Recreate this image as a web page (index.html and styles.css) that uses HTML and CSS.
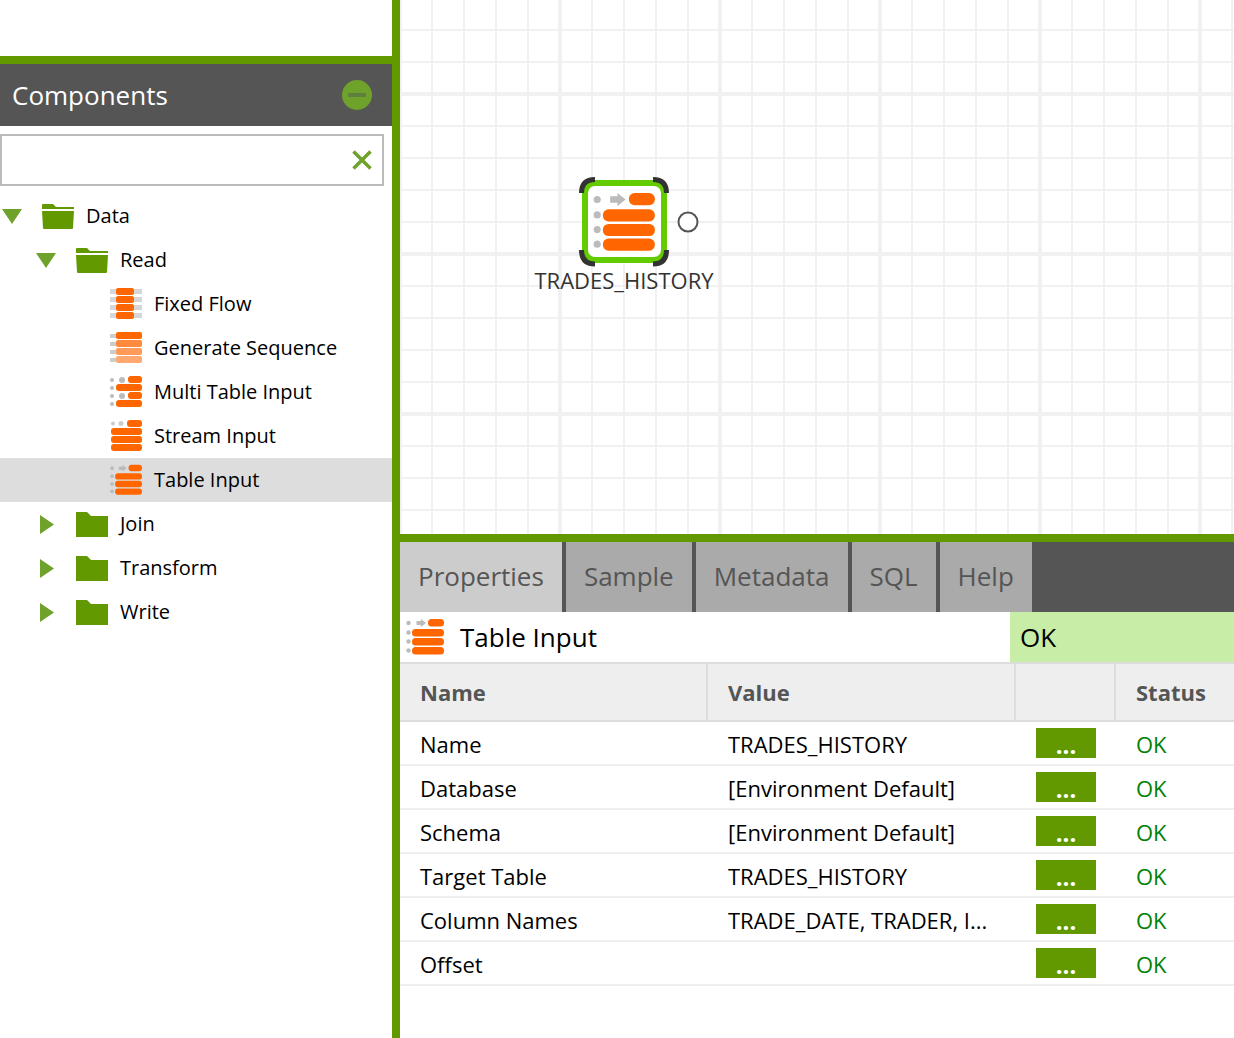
FILE: index.html
```html
<!DOCTYPE html>
<html lang="en">
<head>
<meta charset="utf-8">
<title>Components</title>
<link rel="stylesheet" href="styles.css">
</head>
<body>
<svg class="defs" width="0" height="0" aria-hidden="true">
  <defs>
    <symbol id="i-table" viewBox="0 0 38 36">
      <g fill="#bbb"><circle cx="2.500" cy="4" r="2.200"/><circle cx="2.500" cy="13.500" r="2.200"/><circle cx="2.500" cy="22.500" r="2.200"/><circle cx="2.500" cy="31.500" r="2.200"/><path d="M10.500 2h4.500V0l5 4-5 4V6h-4.500z"/></g>
      <g fill="#f60"><rect x="22" y="0" width="16" height="7.500" rx="3.500"/><rect x="6" y="10" width="32" height="7.500" rx="3.500"/><rect x="6" y="19" width="32" height="7.500" rx="3.500"/><rect x="6" y="28" width="32" height="7.500" rx="3.500"/></g>
    </symbol>
    <symbol id="i-fixed" viewBox="0 0 32 32">
      <g fill="#ccc"><rect x="0" y="1" width="32" height="5" opacity=".8"/><rect x="0" y="9" width="32" height="5" opacity=".8"/><rect x="0" y="17" width="32" height="5" opacity=".8"/><rect x="0" y="25" width="32" height="5" opacity=".8"/></g>
      <g fill="#f60"><rect x="6" y="0" width="18" height="7" rx="2"/><rect x="6" y="8" width="18" height="7" rx="2"/><rect x="6" y="16" width="18" height="7" rx="2"/><rect x="6" y="24" width="18" height="7" rx="2"/></g>
    </symbol>
    <symbol id="i-seq" viewBox="0 0 32 32">
      <g fill="#ccc"><rect x="0" y="2" width="6" height="4"/><rect x="0" y="10" width="6" height="4"/><rect x="0" y="18" width="6" height="4"/><rect x="0" y="26" width="6" height="4"/></g>
      <rect x="6" y="0" width="26" height="7" rx="2" fill="#f60"/><rect x="6" y="8" width="26" height="7" rx="2" fill="#ff8a3d"/><rect x="6" y="16" width="26" height="7" rx="2" fill="#ff9a58"/><rect x="6" y="24" width="26" height="7" rx="2" fill="#ffa870"/>
    </symbol>
    <symbol id="i-multi" viewBox="0 0 32 32">
      <g fill="#bbb"><circle cx="2" cy="4" r="2"/><circle cx="12" cy="4" r="3"/><circle cx="2" cy="12" r="2"/><circle cx="2" cy="20" r="2"/><circle cx="12" cy="20" r="3"/><circle cx="2" cy="28" r="2"/></g>
      <g fill="#f60"><rect x="18" y="0" width="14" height="7" rx="3"/><rect x="6" y="8" width="26" height="7" rx="3"/><rect x="18" y="16" width="14" height="7" rx="3"/><rect x="6" y="24" width="26" height="7" rx="3"/></g>
    </symbol>
    <symbol id="i-stream" viewBox="0 0 32 32">
      <g fill="#ccc"><circle cx="3" cy="3.500" r="2"/><circle cx="11" cy="3.500" r="2.500"/></g>
      <g fill="#f60"><rect x="17" y="0" width="15" height="7" rx="3"/><rect x="1" y="8" width="31" height="7" rx="3"/><rect x="1" y="16" width="31" height="7" rx="3"/><rect x="1" y="24" width="31" height="7" rx="3"/></g>
    </symbol>
    <symbol id="i-folder-open" viewBox="0 0 32 25">
      <path fill="#629900" d="M0 1q0-1 1-1h10l3 3h18v2H0z"/><path fill="#629900" d="M0 7h32l-1 17q0 1-1 1H2q-1 0-1-1z"/>
    </symbol>
    <symbol id="i-folder" viewBox="0 0 32 25">
      <path fill="#629900" d="M0 0h11l4 4h17v21H0z"/>
    </symbol>
    <symbol id="i-down" viewBox="0 0 20 15"><path fill="#6fa22a" d="M0 0h20L10 15z"/></symbol>
    <symbol id="i-right" viewBox="0 0 14 19"><path fill="#6fa22a" d="M0 0l14 9.500L0 19z"/></symbol>
  </defs>
</svg>

<div class="app">
  <aside class="side">
    <div class="side-top"></div>
    <header class="panel-head">
      <h2 class="panel-title">Components</h2>
      <svg class="minus" viewBox="0 0 30 30" aria-hidden="true"><circle cx="15" cy="15" r="15" fill="#6fa22a"/><rect x="6" y="13" width="18" height="4" rx="1" fill="#5f7f3f"/></svg>
    </header>
    <div class="search">
      <svg class="clear" viewBox="0 0 20 20" aria-hidden="true"><path d="M1.500 1.500l17 17M18.500 1.500l-17 17" stroke="#6fa22a" stroke-width="3.500" fill="none"/></svg>
    </div>
    <ul class="tree">
      <li class="row"><svg class="tog tog-down"><use href="#i-down"/></svg><svg class="ico ico-f"><use href="#i-folder-open"/></svg><span>Data</span></li>
      <li class="row l1"><svg class="tog tog-down"><use href="#i-down"/></svg><svg class="ico ico-f"><use href="#i-folder-open"/></svg><span>Read</span></li>
      <li class="row l2"><svg class="ico ico-c"><use href="#i-fixed"/></svg><span>Fixed Flow</span></li>
      <li class="row l2"><svg class="ico ico-c"><use href="#i-seq"/></svg><span>Generate Sequence</span></li>
      <li class="row l2"><svg class="ico ico-c"><use href="#i-multi"/></svg><span>Multi Table Input</span></li>
      <li class="row l2"><svg class="ico ico-c"><use href="#i-stream"/></svg><span>Stream Input</span></li>
      <li class="row l2 selected"><svg class="ico ico-c"><use href="#i-table"/></svg><span>Table Input</span></li>
      <li class="row l1"><svg class="tog tog-right"><use href="#i-right"/></svg><svg class="ico ico-f"><use href="#i-folder"/></svg><span>Join</span></li>
      <li class="row l1"><svg class="tog tog-right"><use href="#i-right"/></svg><svg class="ico ico-f"><use href="#i-folder"/></svg><span>Transform</span></li>
      <li class="row l1"><svg class="tog tog-right"><use href="#i-right"/></svg><svg class="ico ico-f"><use href="#i-folder"/></svg><span>Write</span></li>
    </ul>
  </aside>

  <main class="main">
    <section class="canvas">
      <div class="node">
        <svg class="node-icon" viewBox="0 0 90 90" aria-hidden="true">
          <rect x="6" y="6" width="79" height="77" rx="10" fill="#fff" stroke="#62cc00" stroke-width="6"/>
          <g fill="none" stroke="#333" stroke-width="5">
            <path d="M2.500 16Q2.500 2.500 16 2.500"/><path d="M74 2.500Q87.500 2.500 87.500 16"/><path d="M2.500 73Q2.500 87 16 87"/><path d="M87.500 73Q87.500 87 74 87"/>
          </g>
          <svg x="14" y="16" width="62" height="58.500"><use href="#i-table"/></svg>
        </svg>
        <span class="node-label">TRADES_HISTORY</span>
      </div>
      <svg class="port" viewBox="0 0 22 22" aria-hidden="true"><circle cx="11" cy="11" r="9.500" fill="#fff" stroke="#555" stroke-width="2"/></svg>
    </section>

    <section class="details">
      <nav class="tabs">
        <span class="tab active">Properties</span>
        <span class="tab">Sample</span>
        <span class="tab">Metadata</span>
        <span class="tab">SQL</span>
        <span class="tab">Help</span>
      </nav>
      <div class="title-bar">
        <div class="title-name"><svg class="title-icon"><use href="#i-table"/></svg><span>Table Input</span></div>
        <div class="title-status">OK</div>
      </div>
      <div class="grid-row grid-head">
        <div class="cell">Name</div><div class="cell">Value</div><div class="cell"></div><div class="cell">Status</div>
      </div>
      <div class="grid-row"><div class="cell">Name</div><div class="cell">TRADES_HISTORY</div><div class="cell"><span class="more">...</span></div><div class="cell ok">OK</div></div>
      <div class="grid-row"><div class="cell">Database</div><div class="cell">[Environment Default]</div><div class="cell"><span class="more">...</span></div><div class="cell ok">OK</div></div>
      <div class="grid-row"><div class="cell">Schema</div><div class="cell">[Environment Default]</div><div class="cell"><span class="more">...</span></div><div class="cell ok">OK</div></div>
      <div class="grid-row"><div class="cell">Target Table</div><div class="cell">TRADES_HISTORY</div><div class="cell"><span class="more">...</span></div><div class="cell ok">OK</div></div>
      <div class="grid-row"><div class="cell">Column Names</div><div class="cell">TRADE_DATE, TRADER, I...</div><div class="cell"><span class="more">...</span></div><div class="cell ok">OK</div></div>
      <div class="grid-row"><div class="cell">Offset</div><div class="cell"></div><div class="cell"><span class="more">...</span></div><div class="cell ok">OK</div></div>
    </section>
  </main>
</div>
</body>
</html>
```
FILE: styles.css
```css
* { box-sizing: border-box; }
html, body { margin: 0; padding: 0; height: 100%; }
body { font-family: "Open Sans", "Noto Sans", sans-serif; color: #000; background: #fff; overflow: hidden; }
.defs { position: absolute; }

.app { display: flex; width: 1234px; height: 1038px; }

/* left panel */
.side { width: 400px; flex: none; border-right: 8px solid #629900; }
.side-top { height: 64px; border-bottom: 8px solid #629900; }
.panel-head { height: 62px; background: #555; display: flex; align-items: center; justify-content: space-between; padding: 0 20px 0 12px; }
.panel-title { margin: 0 0 1px; font-size: 26px; font-weight: 400; color: #fff; }
.minus { width: 30px; height: 30px; }
.search { width: 384px; height: 52px; margin-top: 8px; border: 2px solid #bbb; display: flex; align-items: center; justify-content: flex-end; padding-right: 10px; }
.clear { width: 20px; height: 20px; }

.tree { list-style: none; margin: 8px 0 0; padding: 0; }
.row { height: 44px; display: flex; align-items: center; font-size: 20px; }
.row span { margin: 0 0 2px 12px; }
.l1 { padding-left: 34px; }
.l2 { padding-left: 110px; }
.selected { background: #ddd; }
.tog { flex: none; filter: blur(.4px); }
.tog-down { width: 20px; height: 15px; margin: 0 20px 0 2px; }
.tog-right { width: 14px; height: 19px; margin: 0 22px 0 6px; }
.ico { flex: none; }
.ico-f { width: 32px; height: 25px; }
.ico-c { width: 32px; height: 32px; filter: blur(.5px); }

/* canvas */
.main { flex: 1; display: flex; flex-direction: column; min-width: 0; }
.canvas {
  position: relative;
  height: 542px;
  border-bottom: 8px solid #629900;
  background-color: #fff;
  background-image:
    linear-gradient(to right, #f1f1f1 4px, transparent 4px),
    linear-gradient(to bottom, #f1f1f1 4px, transparent 4px),
    linear-gradient(to right, #f1f1f1 2px, transparent 2px),
    linear-gradient(to bottom, #f1f1f1 2px, transparent 2px);
  background-size: 160px 160px, 160px 160px, 32px 32px, 32px 32px;
  background-position: 158px 0, 0 92px, 31px 0, 0 29px;
}
.node { position: absolute; left: 124px; top: 177px; width: 200px; display: flex; flex-direction: column; align-items: center; }
.node-icon { width: 90px; height: 90px; display: block; }
.node-label { font-size: 22px; line-height: 30px; color: #333; margin-top: -2px; }
.port { position: absolute; left: 277px; top: 211px; width: 22px; height: 22px; }

/* details */
.details { flex: 1; }
.tabs { height: 70px; background: #555; display: flex; }
.tab { display: flex; align-items: center; padding: 0 18px 2px; background: #aaa; color: #555; font-size: 26px; margin-right: 4px; }
.tab:last-child { margin-right: 0; }
.tab.active { background: #ccc; }
.title-bar { height: 50px; display: flex; }
.title-name { flex: 1; display: flex; align-items: center; padding-left: 6px; font-size: 26px; }
.title-icon { width: 38px; height: 36px; margin-right: 16px; flex: none; }
.title-status { width: 224px; background: #c7eda6; display: flex; align-items: center; padding-left: 10px; font-size: 26px; }

.grid-row { display: grid; grid-template-columns: 308px 308px 100px 118px; height: 44px; border-bottom: 2px solid #eee; font-size: 22px; }
.cell { display: flex; align-items: center; padding-left: 20px; overflow: hidden; white-space: nowrap; padding-top: 2px; }
.cell.ok { color: #008000; }
.grid-head { height: 60px; background: #eee; border-top: 2px solid #ddd; border-bottom: 2px solid #ddd; font-weight: 700; color: #555; }
.grid-head .cell { border-right: 2px solid #ddd; padding-top: 0; }
.grid-head .cell:last-child { border-right: 0; }
.more { width: 60px; height: 30px; padding-top: 5px; background: #629900; color: #fff; font-size: 24px; font-weight: 700; line-height: 24px; text-align: center; display: block; margin-top: -2px; }
```
